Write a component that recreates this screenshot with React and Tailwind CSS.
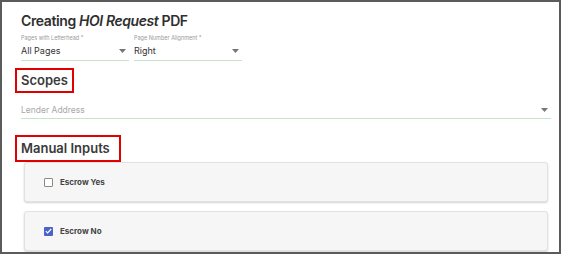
import React from "react";

const font = { fontFamily: "Inter, 'Liberation Sans', sans-serif" };

const Caret = () => (
  <svg width="7" height="4" viewBox="0 0 7 4" className="shrink-0">
    <path d="M0 0h7L3.5 4z" fill="#757575" />
  </svg>
);

const Select = ({ label, value }) => (
  <div className="w-[108px] flex flex-col border-b border-[#c5e5c8] pb-[3px]">
    <span className="text-[5.5px] leading-[8px] text-[#9a9a9a]">{label}</span>
    <div className="flex items-center justify-between mt-[3px] pr-[3px]">
      <span className="text-[9px] leading-[12px] text-[#333]">{value}</span>
      <Caret />
    </div>
  </div>
);

const Heading = ({ children, w, h }) => (
  <div
    className={`border-2 border-[#e00000] flex items-center pl-[4px] -ml-[6px] ${w} ${h}`}
  >
    <span className="text-[13px] font-semibold text-[#3a3a3a] leading-none">{children}</span>
  </div>
);

const CheckRow = ({ label, checked }) => (
  <div className="flex items-center gap-[7px] bg-[#f6f6f6] border border-[#e2e2e2] rounded-[3px] shadow-[0_1px_2px_rgba(0,0,0,0.18)] pl-[19px] h-[40px] w-[524px] ml-[3px]">
    {checked ? (
      <span className="w-[9px] h-[9px] bg-[#4a63c9] rounded-[1px] flex items-center justify-center">
        <svg width="7" height="6" viewBox="0 0 7 6">
          <path d="M0.8 3.2 2.6 5 6.2 1" stroke="#fff" strokeWidth="1.2" fill="none" />
        </svg>
      </span>
    ) : (
      <span className="w-[9px] h-[9px] border border-[#8a8a8a] rounded-[1px] bg-white" />
    )}
    <span className="text-[8px] font-bold text-[#444]">{label}</span>
  </div>
);

export default function App() {
  return (
    <div
      style={font}
      className="w-[561px] h-[254px] border-2 border-[#5b5b5b] bg-white overflow-hidden pl-[19px] pt-[10px]"
    >
      <h1 className="text-[14px] font-semibold leading-[18px] tracking-[-0.4px] text-[#2f2f2f]">
        Creating <i>HOI Request</i> PDF
      </h1>

      <div className="flex gap-[5px] mt-[4px]">
        <Select label="Pages with Letterhead *" value="All Pages" />
        <Select label="Page Number Alignment *" value="Right" />
      </div>

      <div className="mt-[7px]">
        <Heading w="w-[59px]" h="h-[25px]">Scopes</Heading>
      </div>

      <div className="w-[530px] mt-[11px] flex items-center justify-between border-b border-[#c5e5c8] pb-[2px] pr-[3px]">
        <span className="text-[8.5px] leading-[12px] text-[#a8a8a8]">Lender Address</span>
        <Caret />
      </div>

      <div className="mt-[16px]">
        <Heading w="w-[106px]" h="h-[27px]">Manual Inputs</Heading>
      </div>

      <div className="flex flex-col gap-[9px]">
        <CheckRow label="Escrow Yes" />
        <CheckRow label="Escrow No" checked />
      </div>
    </div>
  );
}
